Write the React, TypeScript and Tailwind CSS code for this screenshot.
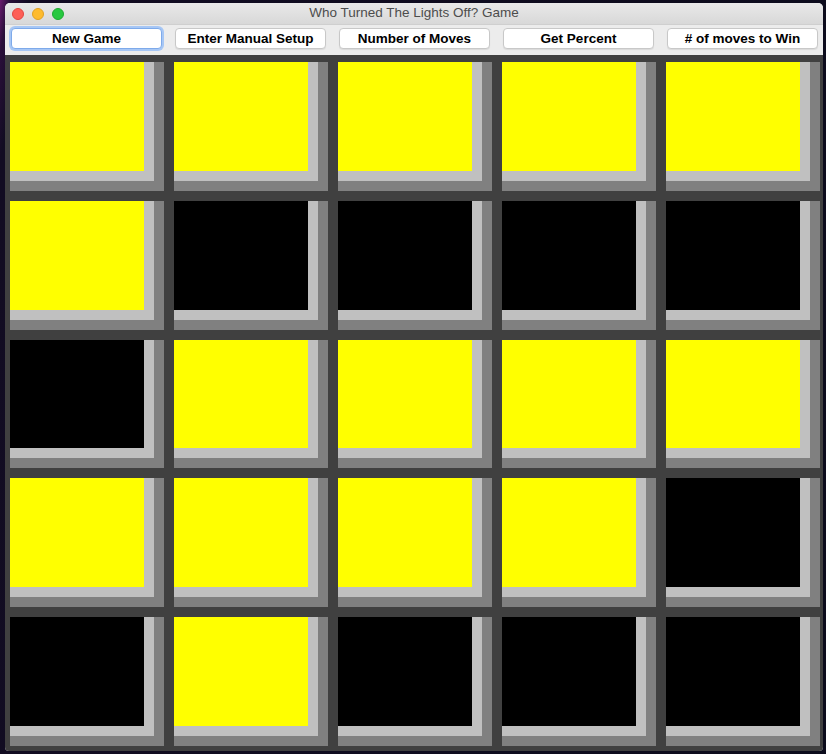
import React from 'react';

const lights: boolean[][] = [
  [true, true, true, true, true],
  [true, false, false, false, false],
  [false, true, true, true, true],
  [true, true, true, true, false],
  [false, true, false, false, false],
];

const buttons = ['New Game', 'Enter Manual Setup', 'Number of Moves', 'Get Percent', '# of moves to Win'];

function Cell({ on }: { on: boolean }) {
  return (
    <div className="bg-[#808080] pr-[10px] pb-[10px] flex">
      <div className="bg-[#c0c0c0] pr-[10px] pb-[10px] flex flex-1">
        <div className={on ? 'flex-1 bg-[#ffff00]' : 'flex-1 bg-black'} />
      </div>
    </div>
  );
}

export default function App() {
  return (
    <div className="w-[826px] h-[754px] overflow-hidden pt-[3px] pl-[5px] bg-[linear-gradient(100deg,#6a1a6e_0%,#2a0f3a_1%,#120c22_3%,#0c0c1c_100%)]">
      <div className="w-[818px] h-[748px] flex flex-col rounded-t-[5px] rounded-b-[4px] overflow-hidden bg-[#ececec]">
        {/* title bar */}
        <div className="relative h-[22px] flex items-center justify-center bg-[linear-gradient(#e9e9e9,#d8d8d8)] border-b border-[#cfcfcf]">
          <div className="absolute left-[7px] top-[5px] flex gap-[8px]">
            <span className="w-[12px] h-[12px] rounded-full bg-[#fd5f57] border border-[#e2463f]" />
            <span className="w-[12px] h-[12px] rounded-full bg-[#febb2e] border border-[#e0a123]" />
            <span className="w-[12px] h-[12px] rounded-full bg-[#28c840] border border-[#1eaa30]" />
          </div>
          <span className="text-[13.5px] text-[#4d4d4d] font-['Liberation_Sans',Arial,sans-serif]">
            Who Turned The Lights Off? Game
          </span>
        </div>

        {/* toolbar */}
        <div className="h-[30px] flex items-start gap-[13px] pl-[6px] pt-[3px]">
          {buttons.map((b, i) => (
            <button
              key={b}
              className={
                i === 0
                  ? 'w-[151px] h-[21px] rounded-[4px] bg-white border border-[#7eaaea] shadow-[0_0_0_2px_#a7c7f5] text-[13.5px] font-bold text-black font-[\'Liberation_Sans\',Arial,sans-serif] leading-none'
                  : 'w-[151px] h-[21px] rounded-[4px] bg-white border border-[#c8c8c8] shadow-[0_1px_1px_rgba(0,0,0,0.08)] text-[13.5px] font-bold text-black font-[\'Liberation_Sans\',Arial,sans-serif] leading-none'
              }
            >
              {b}
            </button>
          ))}
        </div>

        {/* board */}
        <div className="flex-1 bg-[#404040] pt-[7px] pb-[5px] pl-[5px] pr-[3px] grid grid-cols-5 grid-rows-5 gap-[10px]">
          {lights.flatMap((row, r) => row.map((on, c) => <Cell key={`${r}-${c}`} on={on} />))}
        </div>
      </div>
    </div>
  );
}
